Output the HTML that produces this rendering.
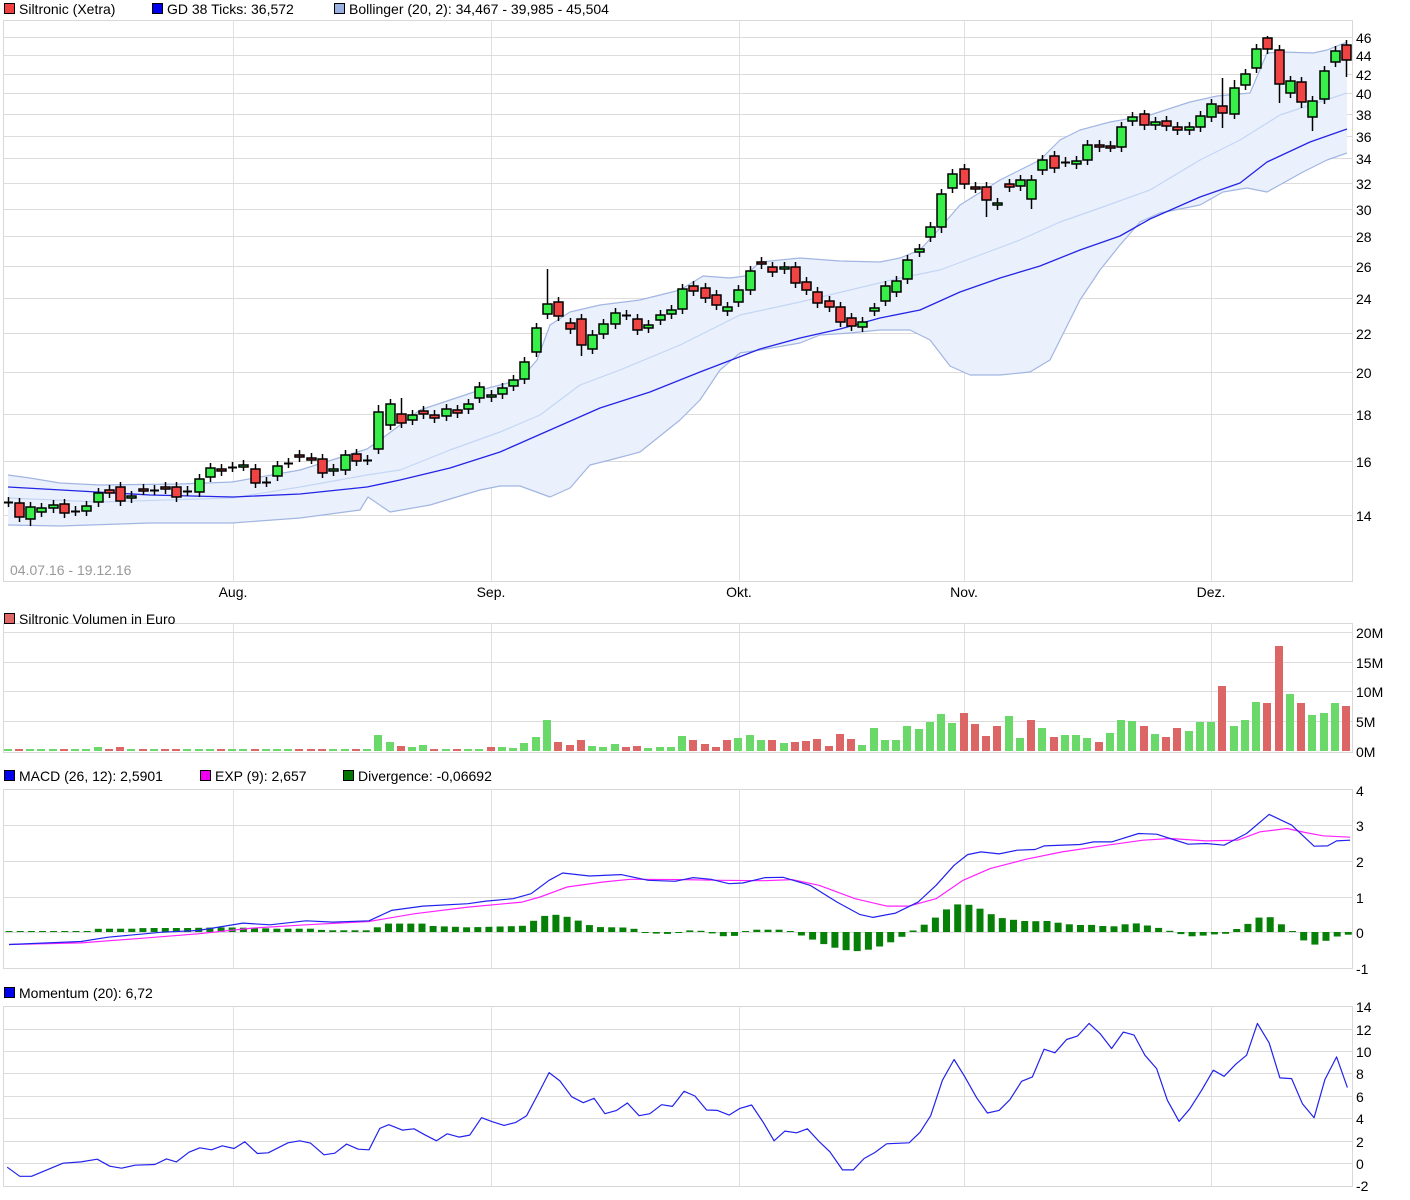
<!DOCTYPE html>
<html><head><meta charset="utf-8">
<style>
html,body{margin:0;padding:0;background:#fff;}
body{width:1410px;height:1200px;overflow:hidden;font-family:"Liberation Sans",sans-serif;}
svg{display:block}
text{font-family:"Liberation Sans",sans-serif;font-size:14px;fill:#000}
</style></head><body>
<svg id="s" width="1410" height="1200" xmlns="http://www.w3.org/2000/svg"></svg>
<script>
var S=document.getElementById('s'),o='';
function R(x,y,w,h,f,st,sw){o+='<rect x="'+x+'" y="'+y+'" width="'+w+'" height="'+h+'" fill="'+f+'"'+(st?' stroke="'+st+'" stroke-width="'+(sw||1)+'"':'')+'/>';}
function L(x1,y1,x2,y2,c,w){o+='<line x1="'+x1+'" y1="'+y1+'" x2="'+x2+'" y2="'+y2+'" stroke="'+c+'" stroke-width="'+(w||1)+'"/>';}
function T(x,y,t,a,c){o+='<text x="'+x+'" y="'+y+'"'+(a?' text-anchor="'+a+'"':'')+(c?' style="fill:'+c+'"':'')+'>'+t+'</text>';}
function P(pts,c,w,f){o+='<polyline points="'+pts.map(function(p){return p[0]+','+p[1]}).join(' ')+'" fill="'+(f||'none')+'" stroke="'+c+'" stroke-width="'+(w||1)+'" stroke-linejoin="round"/>';}
function leg(x,y,c,t){R(x+0.5,y-10.5,10,10,c,'#000',1);T(x+15,y,t);}
var VX=[233,491,739,964,1211];
function panel(y1,y2,hy){R(3.5,y1+0.5,1349,y2-y1,'#fff','#d8d8d8');VX.forEach(function(x){L(x+.5,y1,x+.5,y2,'#e0e0e0')});hy.forEach(function(y){L(3,y+.5,1352,y+.5,'#dcdcdc')});}
// price panel
var py={46:37,44:55,42:74,40:93,38:114,36:136,34:158,32:183,30:209,28:236,26:266,24:298,22:333,20:372,18:414,16:461,14:515};
var pys=[];for(var k in py)pys.push(py[k]);
panel(20,581,pys);
for(var k in py)T(1356,py[k]+6,k);
// Bollinger
var up=[[8,475],[30,478],[60,483],[100,485],[180,484],[232,482],[300,470],[367,449],[380,440],[420,410],[480,390],[520,380],[537,360],[550,325],[570,312],[600,305],[640,300],[680,290],[703,276],[730,278],[745,276],[760,262],[800,258],[840,261],[880,262],[900,258],[920,250],[940,228],[960,205],[1000,180],[1040,160],[1060,140],[1080,130],[1110,122],[1150,115],[1190,102],[1217,96],[1250,93],[1267,53],[1283,52],[1313,53],[1327,50],[1347,42]];
var lo=[[8,525],[60,526],[150,523],[232,523],[300,518],[360,510],[368,497],[390,512],[430,505],[480,490],[500,486],[520,486],[550,497],[570,488],[590,465],[610,460],[640,452],[680,420],[700,400],[720,370],[740,353],[760,350],[800,343],[820,335],[850,333],[880,330],[910,330],[930,340],[950,366],[970,375],[1000,375],[1030,372],[1050,360],[1080,300],[1100,270],[1120,245],[1140,222],[1160,213],[1200,205],[1223,192],[1247,188],[1267,192],[1303,172],[1327,160],[1347,153]];
o+='<polygon points="'+up.concat(lo.slice().reverse()).map(function(p){return p[0]+','+p[1]}).join(' ')+'" fill="#eaf0fc"/>';
P(up,'#a2b6e2',1.2);P(lo,'#a2b6e2',1.2);
P([[8,498],[100,502],[232,498],[300,487],[367,475],[400,470],[450,450],[500,432],[540,415],[580,385],[620,370],[680,345],[740,315],[800,302],[850,290],[900,278],[940,270],[980,255],[1020,240],[1060,222],[1100,208],[1150,190],[1200,160],[1240,140],[1280,115],[1347,93]],'#c4d6f6',1.2);
P([[8,487],[150,495],[233,497],[300,494],[367,487],[400,480],[450,468],[500,452],[550,430],[600,408],[650,392],[700,372],[760,349],[800,338],[840,329],[880,318],[920,310],[960,292],[1000,278],[1040,266],[1080,250],[1120,236],[1150,219],[1200,197],[1240,183],[1267,162],[1310,142],[1347,129]],'#2424e6',1.3);
// candles x,top,bot,c
var C=[[8,502,502,'d'],[19,503,517,'r'],[30,507,519,'g'],[41,508,512,'g'],[53,505,508,'g'],[64,504,513,'r'],[75,511,511,'d'],[86,506,511,'g'],[98,493,502,'g'],[109,490,493,'r'],[120,487,501,'r'],[131,496,498,'g'],[143,489,490,'r'],[154,490,490,'d'],[165,487,489,'r'],[176,487,497,'r'],[187,491,491,'d'],[199,479,492,'g'],[210,468,477,'g'],[221,469,471,'r'],[232,467,467,'d'],[243,465,466,'g'],[255,469,483,'r'],[266,482,482,'d'],[277,466,476,'g'],[288,463,463,'d'],[299,455,457,'r'],[311,458,459,'r'],[322,459,473,'r'],[333,469,471,'g'],[345,455,470,'g'],[356,454,461,'r'],[367,460,460,'d'],[378,412,449,'g'],[390,404,425,'g'],[401,414,423,'r'],[412,415,420,'g'],[423,411,414,'r'],[434,415,418,'r'],[446,409,416,'g'],[457,410,413,'r'],[468,404,409,'g'],[479,387,398,'g'],[491,395,397,'g'],[502,388,394,'g'],[513,380,386,'g'],[524,362,379,'g'],[536,328,352,'g'],[547,304,314,'g'],[558,302,316,'r'],[570,323,329,'r'],[581,319,345,'r'],[592,335,349,'g'],[603,324,334,'g'],[615,313,324,'g'],[626,315,315,'d'],[637,319,330,'r'],[648,325,328,'g'],[660,315,320,'g'],[671,310,314,'g'],[682,289,309,'g'],[693,286,291,'r'],[705,288,298,'r'],[716,295,305,'r'],[727,307,311,'g'],[738,290,302,'g'],[750,271,290,'g'],[761,262,264,'r'],[772,267,272,'r'],[784,267,269,'g'],[795,267,283,'r'],[806,282,290,'r'],[817,292,303,'r'],[829,301,307,'r'],[840,307,322,'r'],[851,318,326,'r'],[862,322,327,'g'],[874,308,311,'g'],[885,286,301,'g'],[896,281,292,'g'],[907,260,279,'g'],[919,249,252,'g'],[930,227,237,'g'],[941,194,227,'g'],[952,174,188,'g'],[964,169,184,'r'],[975,187,188,'r'],[986,187,200,'r'],[997,203,205,'g'],[1009,184,187,'r'],[1020,180,186,'g'],[1031,180,199,'g'],[1042,160,170,'g'],[1054,156,168,'r'],[1065,162,162,'d'],[1076,161,164,'g'],[1087,145,160,'g'],[1099,145,147,'r'],[1110,146,147,'r'],[1121,127,147,'g'],[1132,117,121,'g'],[1144,114,125,'r'],[1155,122,125,'g'],[1166,121,126,'r'],[1177,127,130,'r'],[1189,127,130,'g'],[1200,116,127,'g'],[1211,104,117,'g'],[1222,106,113,'r'],[1234,88,114,'g'],[1245,74,85,'g'],[1256,49,68,'g'],[1267,38,49,'r'],[1279,50,84,'r'],[1290,81,93,'g'],[1301,82,102,'r'],[1312,101,117,'g'],[1324,71,99,'g'],[1335,51,62,'g'],[1346,45,60,'r']];
var WH={547:269,1222:78,1267:36,1144:110,401:398,378:405,1256:44,1234:80};
var WL={581:356,1279:103,1312:131,1346:77,1222:128,30:526,1301:108,941:233,1031:209,986:217};
C.forEach(function(c){var x=c[0],t=c[1],b=c[2];var h=WH[x]||t-5,l=WL[x]||b+5;
 L(x+.5,h,x+.5,l,'#000',1.5);
 if(c[3]=='d'){L(x-4,t+.5,x+5,t+.5,'#000',2);}
 else R(x-4,t,9,Math.max(b-t,2),c[3]=='g'?'#38ee48':'#f04444','#000',1.5);});
T(10,575,'04.07.16 - 19.12.16',null,'#999');
[['Aug.',233],['Sep.',491],['Okt.',739],['Nov.',964],['Dez.',1211]].forEach(function(a){T(a[1],597,a[0],'middle');});
leg(4,14,'#f04040','Siltronic (Xetra)');leg(152,14,'#0000ee','GD 38 Ticks: 36,572');leg(334,14,'#9ab0e0','Bollinger (20, 2): 34,467 - 39,985 - 45,504');
// volume
panel(623,752,[632,662,691,721]);
[['20M',632],['15M',662],['10M',691],['5M',721],['0M',751]].forEach(function(a){T(1356,a[1]+6,a[0]);});
leg(4,624,'#e06666','Siltronic Volumen in Euro');
var V=[[367,2,'g'],[378,16,'g'],[390,9,'g'],[401,5,'r'],[412,4,'g'],[423,6,'g'],[434,2,'r'],[446,2,'g'],[457,2,'r'],[468,2,'g'],[479,2,'g'],[491,4,'r'],[502,4,'g'],[513,3,'g'],[524,8,'g'],[536,14,'g'],[547,31,'g'],[558,9,'r'],[570,6,'r'],[581,11,'r'],[592,5,'g'],[603,4,'g'],[615,7,'g'],[626,4,'r'],[637,5,'r'],[648,3,'g'],[660,4,'g'],[671,4,'g'],[682,15,'g'],[693,11,'r'],[705,7,'r'],[716,4,'r'],[727,11,'r'],[738,13,'g'],[750,16,'g'],[761,11,'g'],[772,11,'r'],[784,8,'g'],[795,9,'r'],[806,10,'r'],[817,12,'r'],[829,5,'r'],[840,17,'r'],[851,12,'r'],[862,6,'g'],[874,23,'g'],[885,11,'g'],[896,11,'g'],[907,25,'g'],[919,22,'g'],[930,29,'g'],[941,37,'g'],[952,28,'g'],[964,38,'r'],[975,27,'r'],[986,15,'r'],[997,25,'r'],[1009,35,'g'],[1020,13,'g'],[1031,31,'r'],[1042,23,'g'],[1054,14,'r'],[1065,16,'g'],[1076,16,'g'],[1087,13,'g'],[1099,9,'r'],[1110,18,'g'],[1121,31,'g'],[1132,30,'g'],[1144,25,'r'],[1155,17,'g'],[1166,14,'r'],[1177,23,'r'],[1189,20,'g'],[1200,29,'g'],[1211,29,'g'],[1222,65,'r'],[1234,25,'g'],[1245,31,'g'],[1256,49,'g'],[1267,48,'r'],[1279,105,'r'],[1290,57,'g'],[1301,48,'r'],[1312,36,'g'],[1324,38,'g'],[1335,48,'g'],[1346,45,'r']];
C.forEach(function(c){if(c[0]<367)V.push([c[0],(c[0]==98||c[0]==120)?4:2,c[3]=='r'?'r':'g']);});
V.forEach(function(v){R(v[0]-4,751-v[1],8,v[1],v[2]=='g'?'#6ad96a':'#dc6666');});
// MACD
panel(789,968,[825,861,897,932]);
[['4',790],['3',825],['2',861],['1',897],['0',932],['-1',968]].forEach(function(a){T(1356,a[1]+6,a[0]);});
leg(4,781,'#0000ee','MACD (26, 12): 2,5901');leg(200,781,'#ee00ee','EXP (9): 2,657');leg(343,781,'#007700','Divergence: -0,06692');
function M(a){return a.map(function(p){return [(p[0]/1.111).toFixed(1),(785+p[1]/2.99).toFixed(1)]});}
var dk=[[10,3],[100,3],[110,10],[150,10],[160,12],[210,12],[250,14],[290,12],[300,10],[350,10],[360,5],[410,5],[420,15],[430,25],[470,25],[480,18],[520,14],[580,18],[590,30],[605,48],[620,52],[635,42],[648,28],[660,15],[700,13],[710,5],[720,-4],[745,-6],[760,3],[770,6],[785,2],[795,-8],[808,-15],[820,-10],[830,2],[840,7],[870,7],[885,-5],[895,-15],[910,-30],[920,-42],[932,-50],[945,-57],[958,-57],[970,-50],[983,-38],[995,-25],[1008,-5],[1020,13],[1033,30],[1045,55],[1058,80],[1070,85],[1082,78],[1095,62],[1107,45],[1120,38],[1133,35],[1145,30],[1158,35],[1170,30],[1183,25],[1195,20],[1208,22],[1220,20],[1233,15],[1245,20],[1258,28],[1270,22],[1283,15],[1295,7],[1308,-3],[1320,-13],[1333,-13],[1345,-6],[1358,-10],[1370,5],[1383,18],[1395,40],[1408,50],[1420,28],[1433,10],[1445,-20],[1458,-40],[1470,-30],[1483,-15],[1495,-8]];
function interp(x){for(var i=0;i<dk.length-1;i++){if(x>=dk[i][0]&&x<=dk[i+1][0]){var t=(x-dk[i][0])/(dk[i+1][0]-dk[i][0]||1);return dk[i][1]+t*(dk[i+1][1]-dk[i][1]);}}return dk[dk.length-1][1];}
for(var i=0;i<121;i++){var zx=10+i*12.4;if(zx>1500)break;var h=interp(zx)/2.99;var x=zx/1.111;
 if(Math.abs(h)<1)h=h<0?-1:1;R((x-3.5).toFixed(1),h>0?(932-h).toFixed(1):932,7,Math.abs(h).toFixed(1),'#068006');}
P(M([[10,477],[90,472],[150,460],[220,445],[280,428],[340,418],[410,408],[460,385],[520,365],[580,350],[600,335],[630,305],[670,290],[700,282],[760,283],[800,285],[850,286],[880,283],[910,300],[950,340],[985,362],[1010,362],[1040,340],[1070,285],[1100,250],[1140,222],[1180,200],[1230,180],[1270,165],[1300,160],[1340,167],[1375,165],[1400,140],[1430,130],[1450,142],[1470,152],[1500,156]]),'#ff22ff',1.2);
P(M([[10,477],[90,468],[120,455],[180,440],[220,435],[270,413],[300,418],[340,406],[370,410],[410,406],[435,375],[470,362],[520,355],[540,347],[570,340],[590,325],[610,285],[625,263],[655,272],[690,268],[720,285],[750,288],[770,277],[790,282],[810,295],[825,293],[850,277],[870,276],[900,300],[930,350],[955,387],[970,396],[995,383],[1020,350],[1040,300],[1060,240],[1075,208],[1090,200],[1110,206],[1130,195],[1150,193],[1160,182],[1200,178],[1215,170],[1235,170],[1265,145],[1285,147],[1300,160],[1320,177],[1340,175],[1360,180],[1385,145],[1410,88],[1435,120],[1460,183],[1475,182],[1485,167],[1500,165]]),'#2222ee',1.2);
// Momentum
panel(1006,1186,[1029,1051,1073,1096,1118,1141,1163]);
[['14',1006],['12',1029],['10',1051],['8',1073],['6',1096],['4',1118],['2',1141],['0',1163],['-2',1185]].forEach(function(a){T(1356,a[1]+6,a[0]);});
leg(4,998,'#0000ee','Momentum (20): 6,72');
function N(a){return a.map(function(p){return [(p[0]/1.111).toFixed(1),(1000+p[1]/2.99).toFixed(1)]});}
P(N([[8,500],[22,527],[35,527],[70,488],[90,484],[108,476],[122,497],[135,503],[150,494],[172,492],[185,475],[196,484],[210,455],[222,442],[235,448],[247,436],[260,444],[272,424],[286,459],[298,457],[320,427],[333,421],[345,428],[360,463],[372,458],[385,431],[398,446],[410,448],[422,384],[432,373],[447,389],[460,385],[472,403],[485,421],[497,400],[510,410],[522,404],[535,352],[547,364],[560,375],[573,366],[585,346],[598,280],[610,217],[622,242],[635,289],[648,307],[660,294],[672,340],[685,330],[697,308],[710,346],[722,340],[735,313],[747,318],[760,273],[772,287],[785,329],[797,330],[810,344],[822,324],[835,314],[848,366],[860,421],[872,392],[885,397],[897,385],[910,423],[922,454],[936,508],[948,508],[960,474],[972,456],[985,430],[1010,427],[1022,396],[1034,346],[1047,240],[1060,178],[1072,230],[1085,292],[1097,338],[1110,330],[1122,298],[1135,243],[1147,230],[1160,147],[1172,158],[1185,118],[1197,108],[1210,70],[1222,100],[1235,145],[1248,96],[1260,105],[1272,165],[1285,205],[1297,300],[1310,363],[1322,325],[1335,270],[1348,210],[1360,228],[1373,192],[1385,165],[1397,70],[1410,128],[1422,233],[1435,235],[1447,310],[1460,352],[1472,238],[1485,170],[1497,262]]),'#2222ee',1.2);
S.innerHTML=o;
</script>
</body></html>
